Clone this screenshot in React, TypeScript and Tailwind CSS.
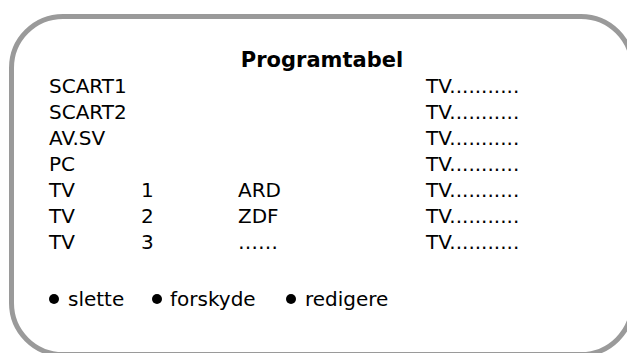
import React from "react";

const rows: [string, string, string][] = [
  ["SCART1", "", ""],
  ["SCART2", "", ""],
  ["AV.SV", "", ""],
  ["PC", "", ""],
  ["TV", "1", "ARD"],
  ["TV", "2", "ZDF"],
  ["TV", "3", "\u2026\u2026"],
];

function Bullet() {
  return <span className="inline-block w-[10px] h-[10px] rounded-full bg-black shrink-0" />;
}

export default function App() {
  return (
    <div
      className="w-[627px] h-[353px] overflow-hidden bg-white pt-[14px] pl-[9px] text-black"
      style={{ fontFamily: "'DejaVu Sans', Verdana, sans-serif" }}
    >
      <div className="w-[626px] h-[343px] border-[5px] border-[#9a9a9a] rounded-[54px] pt-[28px] px-[35px]">
        <div className="text-center text-[21px] font-bold leading-[26px]">Programtabel</div>
        <div className="grid grid-cols-[92px_97px_188px_auto] text-[20px] leading-[26px]">
          {rows.map((r, i) => (
            <React.Fragment key={i}>
              <div className="whitespace-nowrap">{r[0]}</div>
              <div>{r[1]}</div>
              <div>{r[2]}</div>
              <div className="whitespace-nowrap">TV...........</div>
            </React.Fragment>
          ))}
        </div>
        <div className="flex items-center mt-[31px] text-[20px] leading-[26px]">
          <div className="flex items-center w-[103px]">
            <Bullet />
            <span className="ml-[9px]">slette</span>
          </div>
          <div className="flex items-center w-[134px]">
            <Bullet />
            <span className="ml-[8px]">forskyde</span>
          </div>
          <div className="flex items-center">
            <Bullet />
            <span className="ml-[9px]">redigere</span>
          </div>
        </div>
      </div>
    </div>
  );
}
